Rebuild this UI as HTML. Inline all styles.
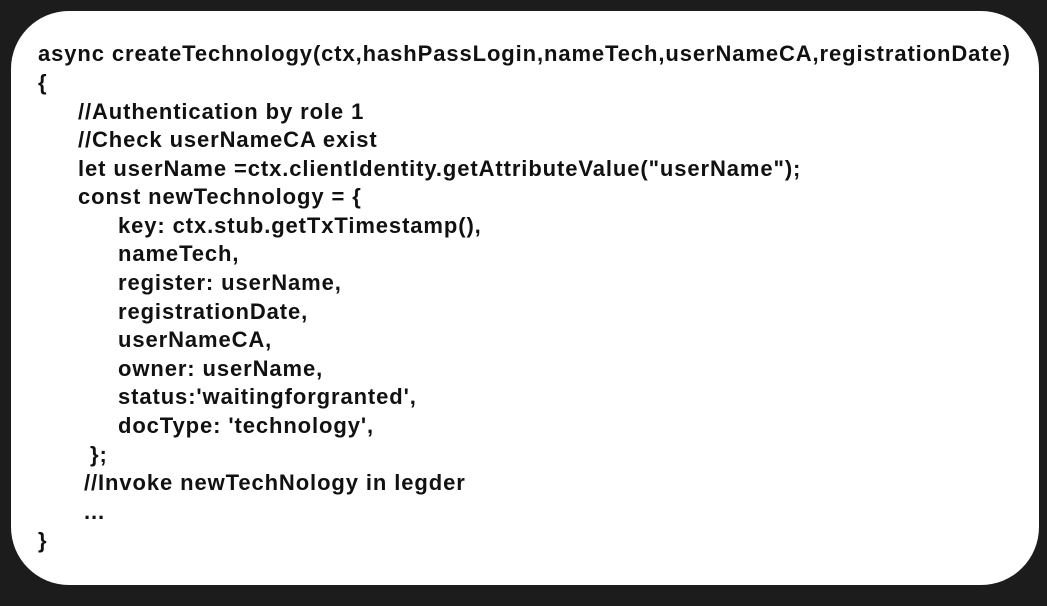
<!DOCTYPE html>
<html><head><style>
html,body{margin:0;padding:0;background:#1c1c1c;width:1047px;height:606px;overflow:hidden}
.box{position:absolute;left:11px;top:11px;width:1028px;height:574px;background:#fff;border-radius:58px}
.l{position:absolute;font-family:"Liberation Sans",Arial,sans-serif;font-weight:bold;font-size:22px;letter-spacing:0.9px;color:#111;white-space:pre;line-height:1}
</style></head><body>
<div class="box"></div>
<div class="l" style="left:38px;top:43px">async createTechnology(ctx,hashPassLogin,nameTech,userNameCA,registrationDate)</div>
<div class="l" style="left:38px;top:72px">{</div>
<div class="l" style="left:78px;top:101px">//Authentication by role 1</div>
<div class="l" style="left:78px;top:129px">//Check userNameCA exist</div>
<div class="l" style="left:78px;top:158px">let userName =ctx.clientIdentity.getAttributeValue("userName");</div>
<div class="l" style="left:78px;top:186px">const newTechnology = {</div>
<div class="l" style="left:118px;top:215px">key: ctx.stub.getTxTimestamp(),</div>
<div class="l" style="left:118px;top:243px">nameTech,</div>
<div class="l" style="left:118px;top:272px">register: userName,</div>
<div class="l" style="left:118px;top:301px">registrationDate,</div>
<div class="l" style="left:118px;top:329px">userNameCA,</div>
<div class="l" style="left:118px;top:358px">owner: userName,</div>
<div class="l" style="left:118px;top:386px">status:'waitingforgranted',</div>
<div class="l" style="left:118px;top:415px">docType: 'technology',</div>
<div class="l" style="left:90px;top:444px">};</div>
<div class="l" style="left:84px;top:472px">//Invoke newTechNology in legder</div>
<div class="l" style="left:84px;top:501px">...</div>
<div class="l" style="left:38px;top:530px">}</div>
</body></html>
